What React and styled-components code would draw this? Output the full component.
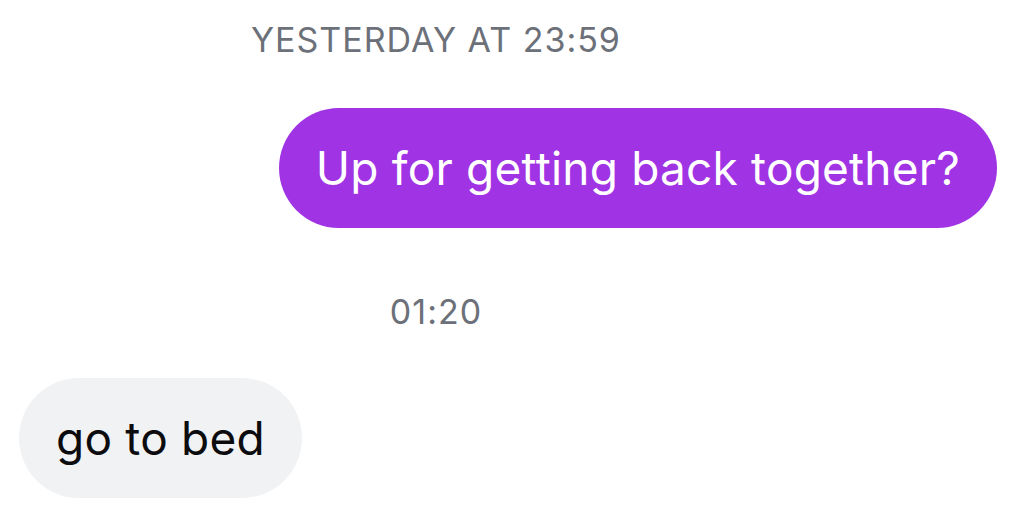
import styled, { createGlobalStyle } from "styled-components";

const GlobalStyle = createGlobalStyle`
  html, body {
    margin: 0;
    padding: 0;
    background: #ffffff;
  }
  body {
    font-family: Inter, "Noto Sans", "Liberation Sans", sans-serif;
    -webkit-font-smoothing: antialiased;
  }
`;

const Thread = styled.div`
  width: 1021px;
  height: 513px;
  overflow: hidden;
  display: flex;
  flex-direction: column;
  padding: 20px 24px 0 19px;
  box-sizing: border-box;
`;

const Stamp = styled.div`
  width: 834px;
  text-align: center;
  color: #6c7079;
  font-size: 34px;
  line-height: 40px;
  letter-spacing: 1px;
  margin-top: ${(p) => p.$top || 0}px;
`;

const Row = styled.div`
  display: flex;
  justify-content: ${(p) => (p.$mine ? "flex-end" : "flex-start")};
  margin-top: ${(p) => p.$top || 0}px;
`;

const Bubble = styled.div`
  height: 120px;
  border-radius: 60px;
  display: flex;
  align-items: center;
  padding: 0 37px;
  font-size: 46px;
  letter-spacing: 0.2px;
  white-space: nowrap;
  background: ${(p) => (p.$mine ? "#a033e3" : "#f1f2f4")};
  color: ${(p) => (p.$mine ? "#ffffff" : "#0c0c0e")};
`;

export default function App() {
  return (
    <>
      <GlobalStyle />
      <Thread>
        <Stamp>YESTERDAY AT 23:59</Stamp>
        <Row $mine $top={48}>
          <Bubble $mine>Up for getting back together?</Bubble>
        </Row>
        <Stamp $top={64}>01:20</Stamp>
        <Row $top={46}>
          <Bubble>go to bed</Bubble>
        </Row>
      </Thread>
    </>
  );
}
